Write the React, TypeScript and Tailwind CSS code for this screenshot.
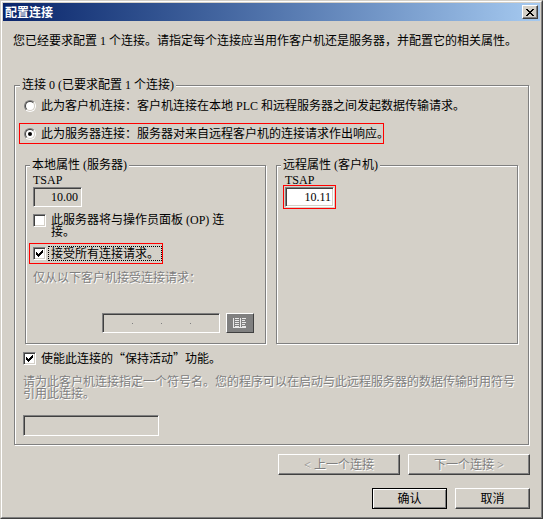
const sunken =
  "border border-t-[#808080] border-l-[#808080] border-r-white border-b-white shadow-[inset_1px_1px_0_#404040,inset_-1px_-1px_0_#d4d0c8]";
const raised =
  "border border-t-white border-l-white border-r-[#404040] border-b-[#404040] shadow-[inset_-1px_-1px_0_#808080]";
const grayText = "text-[#808080] [text-shadow:1px_1px_0_#fff]";

function Group({
  label,
  legendLeft,
  className,
  children,
}: {
  label: string;
  legendLeft: string;
  className: string;
  children?: React.ReactNode;
}) {
  return (
    <div
      className={`relative border border-[#808080] shadow-[inset_1px_1px_0_#fff,1px_1px_0_#fff] ${className}`}
    >
      <span
        className={`absolute -top-[7px] ${legendLeft} bg-[#d4d0c8] px-[2px] leading-[12px] whitespace-nowrap`}
      >
        {label}
      </span>
      {children}
    </div>
  );
}

function Radio({ checked }: { checked?: boolean }) {
  return (
    <div className="w-[12px] h-[12px] shrink-0 rounded-full border border-t-[#808080] border-l-[#808080] border-r-white border-b-white">
      <div className="w-full h-full rounded-full border border-t-[#404040] border-l-[#404040] border-r-[#d4d0c8] border-b-[#d4d0c8] bg-white flex items-center justify-center">
        {checked && <div className="w-[4px] h-[4px] rounded-full bg-black" />}
      </div>
    </div>
  );
}

function Check({ checked }: { checked?: boolean }) {
  return (
    <div className={`w-[13px] h-[13px] shrink-0 bg-white flex items-center justify-center ${sunken}`}>
      {checked && (
        <svg width="7" height="7" viewBox="0 0 7 7" shapeRendering="crispEdges">
          <rect x="6" y="0" width="1" height="1" fill="#000" />
          <rect x="5" y="1" width="2" height="1" fill="#000" />
          <rect x="0" y="2" width="1" height="1" fill="#000" />
          <rect x="4" y="2" width="3" height="1" fill="#000" />
          <rect x="0" y="3" width="2" height="1" fill="#000" />
          <rect x="3" y="3" width="3" height="1" fill="#000" />
          <rect x="0" y="4" width="5" height="1" fill="#000" />
          <rect x="1" y="5" width="3" height="1" fill="#000" />
          <rect x="2" y="6" width="1" height="1" fill="#000" />
        </svg>
      )}
    </div>
  );
}

export default function App() {
  return (
    <div className="w-[543px] h-[519px] bg-[#d4d0c8] border border-t-[#d4d0c8] border-l-[#d4d0c8] border-r-[#404040] border-b-[#404040] font-['Liberation_Serif','Noto_Sans_CJK_SC',serif] text-[12px] leading-[12px] text-black select-none">
      <div className="h-full border border-t-white border-l-white border-r-[#808080] border-b-[#808080] p-px flex flex-col">
        {/* title bar */}
        <div className="h-[18px] shrink-0 flex items-center justify-between pl-[2px] pr-[2px] bg-gradient-to-r from-[#0a246a] to-[#a6caf0]">
          <span className="text-white font-bold font-['Noto_Sans_CJK_SC',sans-serif]">配置连接</span>
          <div className={`w-[16px] h-[14px] bg-[#d4d0c8] flex items-center justify-center ${raised}`}>
            <svg width="8" height="7" viewBox="0 0 8 7" shapeRendering="crispEdges">
              <path d="M0 0h2v1h-2zM6 0h2v1h-2zM1 1h2v1h-2zM5 1h2v1h-2zM2 2h4v1h-4zM3 3h2v1h-2zM2 4h4v1h-4zM1 5h2v1h-2zM5 5h2v1h-2zM0 6h2v1h-2zM6 6h2v1h-2z" fill="#000" />
            </svg>
          </div>
        </div>

        <div className="flex flex-col">
          <p className="mt-[14px] ml-[10px] whitespace-nowrap">
            您已经要求配置 1 个连接。请指定每个连接应当用作客户机还是服务器，并配置它的相关属性。
          </p>

          <Group
            label="连接 0 (已要求配置 1 个连接)"
            legendLeft="left-[5px]"
            className="mt-[38px] ml-[11px] w-[515px] h-[360px] flex flex-col"
          >
            <div className="mt-[14px] ml-[9px] flex items-center gap-[5px] h-[12px] whitespace-nowrap">
              <Radio />
              <span>此为客户机连接：客户机连接在本地 PLC 和远程服务器之间发起数据传输请求。</span>
            </div>
            <div className="mt-[11px] ml-[4px] w-[365px] h-[21px] border border-[#ff0000] pl-[4px] flex items-center gap-[5px] whitespace-nowrap">
              <Radio checked />
              <span>此为服务器连接：服务器对来自远程客户机的连接请求作出响应。</span>
            </div>

            <div className="mt-[21px] ml-[10px] flex gap-[10px]">
              <Group
                label="本地属性 (服务器)"
                legendLeft="left-[4px]"
                className="w-[241px] h-[179px] flex flex-col"
              >
                <span className="mt-[8px] ml-[7px]">TSAP</span>
                <div className={`mt-[1px] ml-[7px] w-[49px] h-[20px] bg-[#d4d0c8] flex items-center justify-end pr-[3px] ${sunken}`}>
                  10.00
                </div>
                <div className="mt-[7px] ml-[7px] flex items-start gap-[5px]">
                  <Check />
                  <span>
                    此服务器将与操作员面板 (OP) 连
                    <br />
                    接。
                  </span>
                </div>
                <div className="mt-[5px] ml-[3px] w-[134px] h-[21px] border border-[#ff0000] pl-[3px] flex items-center gap-[3px] whitespace-nowrap">
                  <Check checked />
                  <span className="outline-1 outline-dotted outline-black px-[2px] h-[13px] flex items-center">
                    接受所有连接请求。
                  </span>
                </div>
                <span className={`mt-[8px] ml-[7px] whitespace-nowrap ${grayText}`}>
                  仅从以下客户机接受连接请求：
                </span>
                <div className="mt-[29px] ml-[76px] flex gap-[6px]">
                  <div className={`w-[118px] h-[20px] bg-[#d4d0c8] flex items-center ${sunken}`}>
                    <span className="ml-[29px] w-[1px] h-[1px] bg-[#808080]" />
                    <span className="ml-[28px] w-[1px] h-[1px] bg-[#808080]" />
                    <span className="ml-[28px] w-[1px] h-[1px] bg-[#808080]" />
                  </div>
                  <div className={`w-[28px] h-[20px] bg-[#808080] flex items-center justify-center ${raised}`}>
                    <svg width="16" height="12" viewBox="0 0 16 12" shapeRendering="crispEdges">
                      <path d="M1 1h1v10h-1zM3 1h4v1h-4zM3 3h4v1h-4zM3 5h4v1h-4zM3 7h4v1h-4zM3 9h4v1h-4zM8 1h1v10h-1zM10 1h4v1h-4zM10 3h3v1h-3zM10 5h4v1h-4zM10 7h3v1h-3zM10 9h4v1h-4zM2 10h12v1h-12z" fill="#e8e8e8" />
                    </svg>
                  </div>
                </div>
              </Group>

              <Group
                label="远程属性 (客户机)"
                legendLeft="left-[4px]"
                className="w-[242px] h-[179px] flex flex-col"
              >
                <span className="mt-[8px] ml-[8px]">TSAP</span>
                <div className="-mt-px ml-[6px] w-[53px] h-[24px] border border-[#ff0000] p-px">
                  <div className={`w-[49px] h-[20px] bg-white flex items-center justify-end pr-[2px] ${sunken}`}>
                    10.11
                  </div>
                </div>
              </Group>
            </div>

            <div className="mt-[8px] ml-[8px] flex items-center gap-[5px] whitespace-nowrap">
              <Check checked />
              <span>
                使能此连接的
                <span className="font-['Noto_Sans_CJK_SC',sans-serif]">“保持活动”</span>
                功能。
              </span>
            </div>
            <p className={`mt-[11px] ml-[8px] whitespace-nowrap ${grayText}`}>
              请为此客户机连接指定一个符号名。您的程序可以在启动与此远程服务器的数据传输时用符号
              <br />
              引用此连接。
            </p>
            <div className={`mt-[15px] ml-[8px] w-[136px] h-[21px] bg-[#d4d0c8] ${sunken}`} />
          </Group>

          <div className="mt-[9px] pr-[10px] flex justify-end gap-[8px]">
            <div className={`w-[122px] h-[21px] flex items-center justify-center ${raised} ${grayText}`}>
              &lt; 上一个连接
            </div>
            <div className={`w-[122px] h-[21px] flex items-center justify-center ${raised} ${grayText}`}>
              下一个连接 &gt;
            </div>
          </div>
          <div className="mt-[13px] pr-[10px] flex justify-end gap-[8px]">
            <div className="w-[75px] h-[21px] border border-black shadow-[inset_1px_1px_0_#fff,inset_-1px_-1px_0_#808080] flex items-center justify-center">
              确认
            </div>
            <div className={`w-[75px] h-[21px] flex items-center justify-center ${raised}`}>
              取消
            </div>
          </div>
        </div>
      </div>
    </div>
  );
}
